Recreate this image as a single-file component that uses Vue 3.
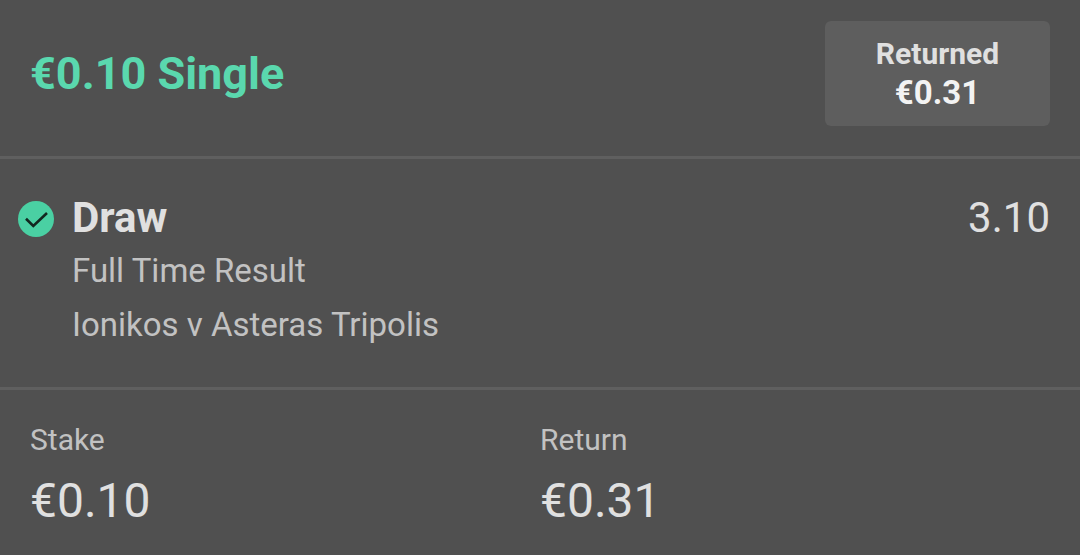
<template>
  <div class="bet">
    <header class="bet-header">
      <h1 class="bet-title">€0.10 Single</h1>
      <div class="returned">
        <span class="returned-label">Returned</span>
        <span class="returned-amount">{{ returned }}</span>
      </div>
    </header>

    <section class="selection">
      <svg class="won-icon" viewBox="0 0 36 36">
        <circle cx="18" cy="18" r="18" fill="#4ad0a3" />
        <path d="M8 17.8 L15.3 25 L29 12" fill="none" stroke="#12271f" stroke-width="2.6" />
      </svg>
      <div class="selection-info">
        <div class="selection-row">
          <span class="selection-name">Draw</span>
          <span class="selection-odds">3.10</span>
        </div>
        <div class="selection-market">Full Time Result</div>
        <div class="selection-fixture">Ionikos v Asteras Tripolis</div>
      </div>
    </section>

    <footer class="totals">
      <div class="total" v-for="item in totals" :key="item.label">
        <div class="total-label">{{ item.label }}</div>
        <div class="total-value">{{ item.value }}</div>
      </div>
    </footer>
  </div>
</template>

<script setup>
const returned = '€0.31'

const totals = [
  { label: 'Stake', value: '€0.10' },
  { label: 'Return', value: returned },
]
</script>

<style>
body {
  background: #505050;
}
</style>

<style scoped>
.bet {
  height: 555px;
  overflow: hidden;
  background: #505050;
  color: #e0e0e0;
  font-family: Roboto, 'Liberation Sans', sans-serif;
}

/* ── Header ── */
.bet-header {
  box-sizing: border-box;
  display: flex;
  justify-content: space-between;
  height: 159px;
  padding: 21px 30px 0;
  border-bottom: 3px solid #5f5f5f;
}

.bet-title {
  margin: 26px 0 0;
  font-size: 45px;
  font-weight: 700;
  line-height: 53px;
  color: #5ad8ae;
}

.returned {
  box-sizing: border-box;
  display: flex;
  flex-direction: column;
  align-items: center;
  width: 225px;
  height: 105px;
  padding-top: 14px;
  border-radius: 6px;
  background: #5e5e5e;
  font-weight: 700;
}

.returned-label {
  font-size: 30px;
  line-height: 38px;
}

.returned-amount {
  font-size: 33px;
  line-height: 39px;
  color: #f3f3f3;
}

/* ── Selection ── */
.selection {
  box-sizing: border-box;
  display: flex;
  gap: 18px;
  height: 231px;
  padding: 34px 30px 0 18px;
  border-bottom: 3px solid #5f5f5f;
}

.won-icon {
  flex: none;
  width: 36px;
  height: 36px;
  margin-top: 8px;
}

.selection-info {
  flex: 1;
}

.selection-row {
  display: flex;
  justify-content: space-between;
  margin-bottom: 2px;
  font-size: 42px;
  line-height: 49px;
}

.selection-name {
  font-weight: 700;
}

.selection-market,
.selection-fixture {
  font-size: 33px;
  line-height: 54px;
  color: #c2c2c2;
}

/* ── Totals ── */
.totals {
  display: grid;
  grid-template-columns: 1fr 1fr;
  padding: 32px 30px 0;
}

.total-label {
  font-size: 30px;
  line-height: 36px;
  color: #c2c2c2;
}

.total-value {
  margin-top: 15px;
  font-size: 48px;
  line-height: 56px;
}
</style>
